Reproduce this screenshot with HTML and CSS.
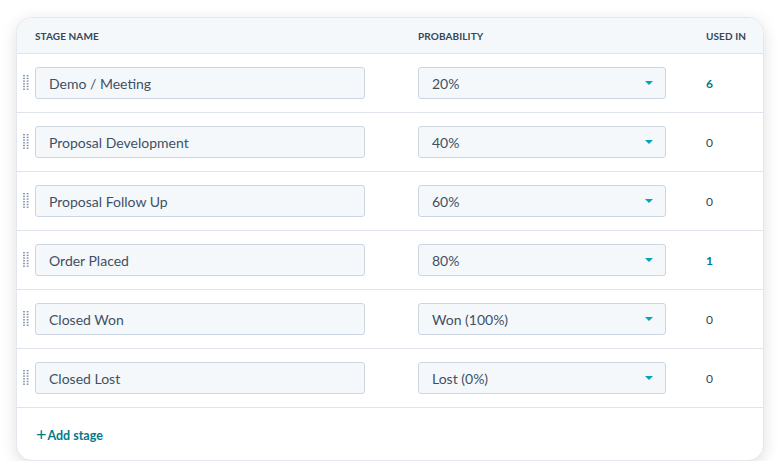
FILE: index.html
```html
<!DOCTYPE html>
<html>
<head>
<meta charset="utf-8">
<link rel="stylesheet" href="styles.css">
</head>
<body>
<div class="card">
  <div class="head">
    <div class="h-name">Stage name</div>
    <div class="h-prob">Probability</div>
    <div class="h-used">Used in</div>
  </div>
  <div class="row">
    <svg class="handle" width="6" height="16" viewBox="0 0 6 16"><g fill="#8a9bb0"><rect x="0" y="0" width="2" height="1.4"/><rect x="0" y="2.7" width="2" height="1.4"/><rect x="0" y="5.4" width="2" height="1.4"/><rect x="0" y="8.1" width="2" height="1.4"/><rect x="0" y="10.8" width="2" height="1.4"/><rect x="0" y="13.5" width="2" height="1.4"/><rect x="3.6" y="0" width="2" height="1.4"/><rect x="3.6" y="2.7" width="2" height="1.4"/><rect x="3.6" y="5.4" width="2" height="1.4"/><rect x="3.6" y="8.1" width="2" height="1.4"/><rect x="3.6" y="10.8" width="2" height="1.4"/><rect x="3.6" y="13.5" width="2" height="1.4"/></g></svg>
    <div class="input">Demo / Meeting</div>
    <div class="select">20%<span class="caret"></span></div>
    <div class="used link">6</div>
  </div>
  <div class="row">
    <svg class="handle" width="6" height="16" viewBox="0 0 6 16"><g fill="#8a9bb0"><rect x="0" y="0" width="2" height="1.4"/><rect x="0" y="2.7" width="2" height="1.4"/><rect x="0" y="5.4" width="2" height="1.4"/><rect x="0" y="8.1" width="2" height="1.4"/><rect x="0" y="10.8" width="2" height="1.4"/><rect x="0" y="13.5" width="2" height="1.4"/><rect x="3.6" y="0" width="2" height="1.4"/><rect x="3.6" y="2.7" width="2" height="1.4"/><rect x="3.6" y="5.4" width="2" height="1.4"/><rect x="3.6" y="8.1" width="2" height="1.4"/><rect x="3.6" y="10.8" width="2" height="1.4"/><rect x="3.6" y="13.5" width="2" height="1.4"/></g></svg>
    <div class="input">Proposal Development</div>
    <div class="select">40%<span class="caret"></span></div>
    <div class="used">0</div>
  </div>
  <div class="row">
    <svg class="handle" width="6" height="16" viewBox="0 0 6 16"><g fill="#8a9bb0"><rect x="0" y="0" width="2" height="1.4"/><rect x="0" y="2.7" width="2" height="1.4"/><rect x="0" y="5.4" width="2" height="1.4"/><rect x="0" y="8.1" width="2" height="1.4"/><rect x="0" y="10.8" width="2" height="1.4"/><rect x="0" y="13.5" width="2" height="1.4"/><rect x="3.6" y="0" width="2" height="1.4"/><rect x="3.6" y="2.7" width="2" height="1.4"/><rect x="3.6" y="5.4" width="2" height="1.4"/><rect x="3.6" y="8.1" width="2" height="1.4"/><rect x="3.6" y="10.8" width="2" height="1.4"/><rect x="3.6" y="13.5" width="2" height="1.4"/></g></svg>
    <div class="input">Proposal Follow Up</div>
    <div class="select">60%<span class="caret"></span></div>
    <div class="used">0</div>
  </div>
  <div class="row">
    <svg class="handle" width="6" height="16" viewBox="0 0 6 16"><g fill="#8a9bb0"><rect x="0" y="0" width="2" height="1.4"/><rect x="0" y="2.7" width="2" height="1.4"/><rect x="0" y="5.4" width="2" height="1.4"/><rect x="0" y="8.1" width="2" height="1.4"/><rect x="0" y="10.8" width="2" height="1.4"/><rect x="0" y="13.5" width="2" height="1.4"/><rect x="3.6" y="0" width="2" height="1.4"/><rect x="3.6" y="2.7" width="2" height="1.4"/><rect x="3.6" y="5.4" width="2" height="1.4"/><rect x="3.6" y="8.1" width="2" height="1.4"/><rect x="3.6" y="10.8" width="2" height="1.4"/><rect x="3.6" y="13.5" width="2" height="1.4"/></g></svg>
    <div class="input">Order Placed</div>
    <div class="select">80%<span class="caret"></span></div>
    <div class="used link">1</div>
  </div>
  <div class="row">
    <svg class="handle" width="6" height="16" viewBox="0 0 6 16"><g fill="#8a9bb0"><rect x="0" y="0" width="2" height="1.4"/><rect x="0" y="2.7" width="2" height="1.4"/><rect x="0" y="5.4" width="2" height="1.4"/><rect x="0" y="8.1" width="2" height="1.4"/><rect x="0" y="10.8" width="2" height="1.4"/><rect x="0" y="13.5" width="2" height="1.4"/><rect x="3.6" y="0" width="2" height="1.4"/><rect x="3.6" y="2.7" width="2" height="1.4"/><rect x="3.6" y="5.4" width="2" height="1.4"/><rect x="3.6" y="8.1" width="2" height="1.4"/><rect x="3.6" y="10.8" width="2" height="1.4"/><rect x="3.6" y="13.5" width="2" height="1.4"/></g></svg>
    <div class="input">Closed Won</div>
    <div class="select">Won (100%)<span class="caret"></span></div>
    <div class="used">0</div>
  </div>
  <div class="row">
    <svg class="handle" width="6" height="16" viewBox="0 0 6 16"><g fill="#8a9bb0"><rect x="0" y="0" width="2" height="1.4"/><rect x="0" y="2.7" width="2" height="1.4"/><rect x="0" y="5.4" width="2" height="1.4"/><rect x="0" y="8.1" width="2" height="1.4"/><rect x="0" y="10.8" width="2" height="1.4"/><rect x="0" y="13.5" width="2" height="1.4"/><rect x="3.6" y="0" width="2" height="1.4"/><rect x="3.6" y="2.7" width="2" height="1.4"/><rect x="3.6" y="5.4" width="2" height="1.4"/><rect x="3.6" y="8.1" width="2" height="1.4"/><rect x="3.6" y="10.8" width="2" height="1.4"/><rect x="3.6" y="13.5" width="2" height="1.4"/></g></svg>
    <div class="input">Closed Lost</div>
    <div class="select">Lost (0%)<span class="caret"></span></div>
    <div class="used">0</div>
  </div>
  <div class="foot">
    <span class="add"><span class="plus">+</span>Add stage</span>
  </div>
</div>
</body>
</html>
```

FILE: styles.css
```css
* { box-sizing: border-box; }
body {
  margin: 0;
  background: #ffffff;
  font-family: Lato, "Liberation Sans", sans-serif;
  color: #33475b;
}
.card {
  margin: 17px 0 0 16px;
  width: 748px;
  height: 444px;
  border: 1px solid #e3e8ee;
  border-radius: 16px;
  background: #fff;
  box-shadow: 0 4px 16px rgba(0,0,0,0.13);
  overflow: hidden;
}
.head, .row {
  display: grid;
  grid-template-columns: 330px 248px auto;
  column-gap: 53px;
  align-items: center;
  padding-left: 18px;
  border-bottom: 1px solid #dfe3eb;
  position: relative;
}
.head {
  height: 36px;
  background: #f5f8fa;
  font-size: 10px;
  font-weight: 700;
  text-transform: uppercase;
  letter-spacing: 0.1px;
  color: #33475b;
}
.head .h-used { margin-left: -13px; }
.row { height: 59px; }
.handle {
  position: absolute;
  left: 6px;
  top: 21px;
}
.input, .select {
  height: 32px;
  border: 1px solid #cbd6e2;
  border-radius: 3px;
  background: #f5f8fa;
  font-size: 14px;
  display: flex;
  align-items: center;
  padding-left: 13px;
  color: #3d5166;
}
.select { position: relative; }
.caret {
  position: absolute;
  right: 12px;
  top: 13px;
  width: 0; height: 0;
  border-left: 4px solid transparent;
  border-right: 4px solid transparent;
  border-top: 4px solid #00a4bd;
}
.used {
  font-size: 12px;
  margin-left: -13px;
  color: #33475b;
}
.used.link { color: #007a8c; font-weight: 700; }
.foot {
  height: 54px;
  display: flex;
  align-items: center;
  padding-left: 19px;
}
.add {
  color: #007a8c;
  font-weight: 700;
  font-size: 12.5px;
  display: flex;
  align-items: center;
}
.plus { font-size: 18px; font-weight: 400; margin-right: 1px; line-height: 1; margin-top: -2px; }
```
